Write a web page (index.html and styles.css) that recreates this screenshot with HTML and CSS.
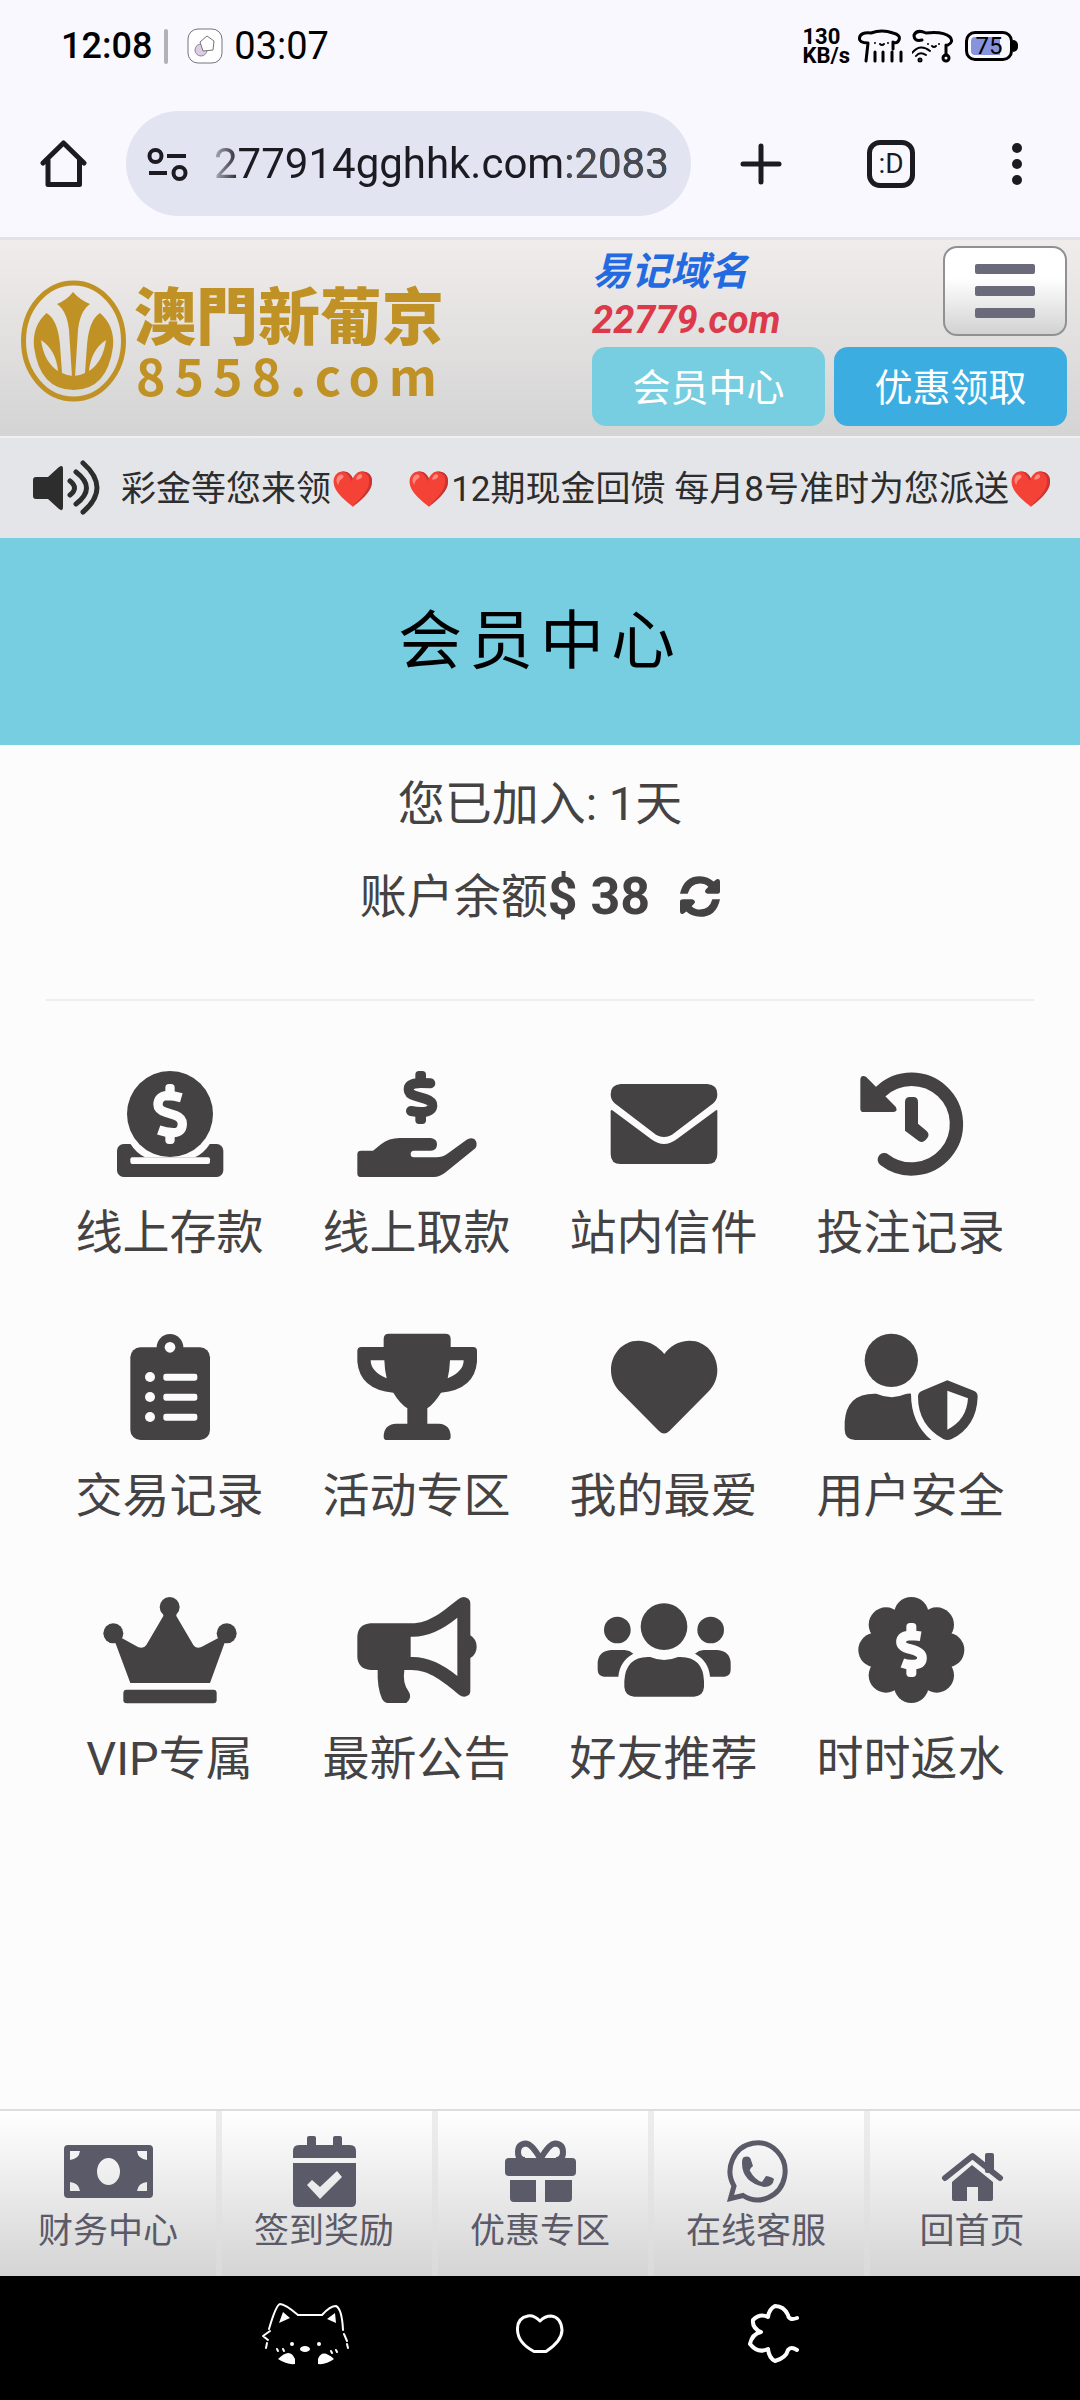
FILE: index.html
```html
<!DOCTYPE html>
<html lang="zh-CN">
<head>
<meta charset="utf-8">
<meta name="viewport" content="width=device-width, initial-scale=1">
<title>会员中心</title>
<link rel="stylesheet" href="styles.css">
</head>
<body>
<div class="status">
  <span class="clock">12:08</span>
  <span class="sep"></span>
  <svg class="app" viewBox="0 0 36 36"><rect x="1" y="1" width="34" height="34" rx="10" fill="#fff" stroke="#77727c" stroke-width="1"/><circle cx="14" cy="22" r="6" fill="#dccde3" stroke="#8d8494" stroke-width="1"/><path d="M20 8l7 5-1 9-10 1-3-9z" fill="#fff" stroke="#77727c" stroke-width="1" stroke-linejoin="round"/></svg>
  <span class="timer">03:07</span>
  <div class="signals">
    <span class="speed"><span>130</span><span>KB/s</span></span>
    <svg width="46" height="34" viewBox="858 29 46 34" fill="none" stroke="#000" stroke-width="3" stroke-linecap="round"><path d="M868 43Q859 43 859.500 38Q860 32 871 33Q882 29 893 33Q901 35 899 40Q897 44 893 42M868 43L866 61M893 43V49M875 52V61M883 52V61M892 52V61M901 52V61"/><path d="M875 43h0M888 43h0M880 44q2 2 4 0" stroke-width="2"/></svg>
    <svg width="42" height="34" viewBox="914 29 42 34" fill="none" stroke="#000" stroke-width="3" stroke-linecap="round"><path d="M924 40Q916 42 916 35Q919 29 928 33Q945 31 952 37Q956 42 950 45M948 45L948 55"/><circle cx="948" cy="58" r="3"/><path d="M914 53Q922 43 932 51M918 56Q922 51 928 55" stroke-width="2"/><circle cx="922" cy="60" r="1"/><path d="M930 44h0M941 44h0M934 46q2 2 4 0" stroke-width="2"/></svg>
    <span class="battery">75</span>
  </div>
</div>
<header class="browser">
  <button class="tool" aria-label="主页"><svg width="48" height="49" viewBox="40 139 48 49" fill="none" stroke="#1b1b21" stroke-width="5" stroke-linecap="round" stroke-linejoin="round"><path d="M43 163L63.500 143L84 163M48 160V184.500H79.500V160"/></svg></button>
  <div class="address">
    <svg width="42" height="34" viewBox="147 146 42 34" fill="none" stroke="#1b1b21" stroke-width="4"><circle cx="155.500" cy="155" r="6"/><circle cx="179.500" cy="172" r="6"/><path d="M167 155H186M149 172H167"/></svg>
    <span class="url">277914gghhk.com<span class="port">:2083</span></span>
  </div>
  <div class="tools">
    <button class="tool" aria-label="新标签页"><svg width="42" height="42" viewBox="0 0 42 42" stroke="#1b1b21" stroke-width="5" stroke-linecap="round"><path d="M21 3V39M3 21H39"/></svg></button>
    <button class="tool tabs" aria-label="标签页">:D</button>
    <button class="tool more" aria-label="更多"><svg width="12" height="42" viewBox="0 0 12 42" fill="#1b1b21"><circle cx="6" cy="5" r="5"/><circle cx="6" cy="21" r="5"/><circle cx="6" cy="37" r="5"/></svg></button>
  </div>
</header>

<header class="site">
  <a class="logo" href="#">
    <svg width="106" height="122" viewBox="21 280 106 122" fill="#c09225"><ellipse cx="73.500" cy="341" rx="50" ry="58" fill="none" stroke="#c09225" stroke-width="5"/><path d="M46.500 313Q32 326 34 347Q40 390 73.500 390Q107 390 113 347Q115 326 100 313Q89 320 87 345L85 373Q73.500 379 62 373L60 345Q58 320 46.500 313Z"/><path d="M73 292Q80 300 90 304Q80 311 78 330L75 377H72L69 330Q67 311 57 304Q67 300 73 292Z"/><path fill="#e0dfde" d="M41 340Q56 350 58 371Q44 362 41 340ZM106 340Q91 350 89 371Q103 362 106 340Z"/></svg>
    <span class="brand"><strong>澳門新葡京</strong><span>8558.com</span></span>
  </a>
  <div class="account">
    <a class="domain" href="#"><span>易记域名</span><em>22779.com</em></a>
    <button class="menu" aria-label="菜单"><i></i><i></i><i></i></button>
    <button class="pill">会员中心</button>
    <button class="pill promo">优惠领取</button>
  </div>
</header>

<section class="notice">
  <svg width="67" height="56" viewBox="33 459 67 56" fill="#2d2d2d"><path d="M36 476H48L59 466Q63 463 63 468V506Q63 511 59 508L48 498H36Q33 498 33 495V479Q33 476 36 476Z"/><path d="M70 480Q79 487 70 494M76 471Q97 487 76 503M83 462Q111 487 83 511" fill="none" stroke="#2d2d2d" stroke-width="5" stroke-linecap="round"/></svg>
  <p>彩金等您来领<span class="emoji">❤️</span><span class="next"><span class="emoji">❤️</span>12期现金回馈 每月8号准时为您派送<span class="emoji">❤️</span></span></p>
</section>

<h1>会员中心</h1>

<main>
  <section class="summary">
    <p>您已加入: 1天</p>
    <p>账户余额<b>$ 38</b><button class="refresh" aria-label="刷新余额"><svg width="40" height="41" viewBox="1137 954 120 122" fill="#444243"><path id="half" d="M1137 1007Q1148 954 1197 954Q1222 955 1238 970L1247 963Q1257 960 1257 972V1000Q1257 1007 1247 1007H1220Q1207 1002 1215 993L1222 986Q1212 976 1197 976Q1168 977 1160 1007Z"/><use href="#half" transform="rotate(180 1197 1015)"/></svg></button></p>
  </section>
  <nav class="grid" aria-label="会员功能">
    <a href="#"><svg viewBox="191 93 402 318"><rect x="233" y="312" width="319" height="99" rx="20"/><path class="cut" d="M273 311Q290 338 317 352H467Q495 338 512 311Z"/><rect class="cut" x="273" y="352" width="239" height="20" rx="6"/><circle cx="392" cy="222" r="129"/><rect class="cut" x="378" y="132" width="28" height="42" rx="11"/><rect class="cut" x="378" y="270" width="28" height="42" rx="11"/><path class="cutline" stroke-width="28" d="M426 173Q405 167 384 167Q356 168 356 194Q356 209 380 217L408 226Q429 234 429 252Q428 278 402 278Q380 278 358 270"/></svg>线上存款</a>
    <a href="#"><svg viewBox="931 93 402 318"><rect x="1127" y="93" width="32" height="42" rx="11"/><rect x="1127" y="210" width="32" height="42" rx="11"/><path class="line" stroke-width="30" d="M1172 130Q1158 129 1143 129Q1107 129 1107 149Q1107 162 1128 168L1158 177Q1179 184 1178 197Q1176 216 1143 216Q1130 216 1114 213"/><path d="M965 332H1000L1024 313Q1048 294 1080 294H1173Q1192 296 1192 313Q1192 332 1173 332H1122Q1113 333 1113 342Q1113 352 1122 352H1190Q1208 352 1222 342L1281 299Q1292 291 1304 297Q1317 310 1307 325L1218 397Q1201 411 1182 411H965Q953 411 953 401V342Q953 332 965 332Z"/></svg>线上取款</a>
    <a href="#"><svg viewBox="172 93 402 318"><path d="M243 132H503Q533 134 533 163Q533 180 521 190L405 278Q373 304 341 278L225 190Q213 180 213 163Q213 134 243 132Z"/><path d="M213 213Q214 208 220 212L335 298Q373 326 411 298L527 212Q533 208 533 213V342Q533 372 503 372H243Q213 372 213 342Z"/></svg>站内信件</a>
    <a href="#"><svg viewBox="912 93 402 318"><path class="line" stroke-width="40" d="M1022 155A134.500 134.500 0 1 1 1033 359"/><path d="M961 120Q961 103 978 110L1067 200Q1075 214 1060 216H971Q961 216 961 206ZM1095 186Q1095 171 1110 171H1120Q1134 171 1134 186V251L1160 273Q1170 283 1162 294L1156 301Q1147 310 1136 303L1095 272Z"/></svg>投注记录</a>
    <a href="#"><svg viewBox="191 882 402 318"><rect x="273" y="922" width="239" height="278" rx="30"/><circle cx="392" cy="922" r="40"/><g class="cut"><circle cx="392" cy="922" r="16"/><circle cx="332" cy="1011" r="15"/><circle cx="332" cy="1071" r="15"/><circle cx="332" cy="1131" r="15"/><rect x="372" y="1001" width="102" height="21" rx="7"/><rect x="372" y="1061" width="102" height="21" rx="7"/><rect x="372" y="1121" width="102" height="21" rx="7"/></g></svg>交易记录</a>
    <a href="#"><svg viewBox="931 882 402 318"><path fill-rule="evenodd" d="M1048 881H1217Q1233 881 1233 897V921H1300Q1312 921 1312 933V965Q1305 1048 1204 1058Q1184 1090 1163 1105V1151H1197Q1233 1153 1233 1190Q1233 1200 1223 1200H1042Q1032 1200 1032 1190Q1032 1153 1070 1151H1103V1105Q1080 1090 1061 1058Q960 1048 953 965V933Q953 921 965 921H1032V897Q1032 881 1048 881ZM993 961H1034Q1035 990 1041 1015Q993 995 993 961ZM1272 961H1231Q1230 990 1224 1015Q1272 995 1272 961Z"/></svg>活动专区</a>
    <a href="#"><svg viewBox="172 882 402 318"><path d="M374 942L366 933C345 912 322 902 296 902C248 902 214 943 214 990C214 1016 224 1038 242 1056L357 1172Q373 1189 390 1172L505 1056C523 1038 533 1016 533 990C533 943 498 902 450 902C425 902 400 912 381 933Z"/></svg>我的最爱</a>
    <a href="#"><svg viewBox="912 882 402 318"><circle cx="1054" cy="961" r="80"/><path d="M1009 1061Q1054 1081 1095 1063Q1104 1060 1113 1061Q1113 1150 1174 1200H945Q914 1198 914 1169V1145Q920 1058 1009 1061Z"/><path fill-rule="evenodd" d="M1222 1021L1303 1053Q1313 1058 1313 1070Q1310 1160 1235 1197Q1222 1203 1210 1197Q1134 1155 1134 1070Q1134 1058 1145 1053ZM1222 1052V1169Q1280 1140 1284 1075Z"/></svg>用户安全</a>
    <a href="#"><svg viewBox="191 108 402 318"><circle cx="391" cy="138" r="30"/><circle cx="222" cy="217" r="30"/><circle cx="562" cy="217" r="30"/><path d="M273 366L228 245L247 231L296 258Q312 265 321 252L372 165V150H411V165L462 252Q470 265 486 258L537 231L556 245L512 366Z"/><rect x="252" y="386" width="280" height="41" rx="10"/></svg>VIP专属</a>
    <a href="#"><svg viewBox="931 108 402 318"><path fill-rule="evenodd" d="M993 187H1115C1170 187 1210 150 1258 113Q1272 103 1286 113Q1292 118 1292 128V223Q1311 235 1311 257Q1311 280 1292 291V388Q1292 400 1286 403Q1272 412 1258 401C1210 362 1170 327 1115 327H1094Q1088 365 1106 390Q1120 410 1100 426H1045Q1033 425 1027 413Q1012 380 1014 327H993Q955 324 953 288V226Q955 190 993 187ZM1113 227V288Q1180 285 1253 345V170Q1180 230 1113 227Z"/></svg>最新公告</a>
    <a href="#"><svg viewBox="172 108 402 318"><circle cx="373" cy="197" r="70"/><circle cx="233" cy="207" r="40"/><circle cx="513" cy="207" r="40"/><path id="side" d="M214 267H255Q270 268 281 278Q240 300 236 347H193Q175 345 174 328V305Q176 270 214 267Z"/><use href="#side" transform="translate(747 0) scale(-1 1)"/><path d="M332 288Q373 306 415 288Q490 284 493 360V378Q491 405 463 407H284Q256 405 254 378V360Q258 284 332 288Z"/></svg>好友推荐</a>
    <a href="#"><svg viewBox="912 108 402 318"><circle cx="1114" cy="267" r="112"/><circle cx="1114" cy="160" r="52"/><circle cx="1114" cy="374" r="52"/><circle cx="1007" cy="267" r="52"/><circle cx="1221" cy="267" r="52"/><circle cx="1038" cy="191" r="52"/><circle cx="1190" cy="191" r="52"/><circle cx="1038" cy="343" r="52"/><circle cx="1190" cy="343" r="52"/><rect class="cut" x="1099" y="186" width="30" height="42" rx="11"/><rect class="cut" x="1099" y="306" width="30" height="42" rx="11"/><path class="cutline" stroke-width="29" d="M1142 226Q1124 223 1112 223Q1083 225 1083 243Q1083 258 1110 264Q1146 273 1146 290Q1146 311 1114 311Q1100 311 1087 306"/></svg>时时返水</a>
  </nav>
</main>

<nav class="bottom" aria-label="底部导航">
  <a href="#"><svg viewBox="63 2136 90 72"><path fill-rule="evenodd" d="M68 2145H149Q153 2145 153 2149V2194Q153 2198 149 2198H68Q64 2198 64 2194V2149Q64 2145 68 2145ZM97 2171.500A11.500 13.500 0 0 0 120 2171.500A11.500 13.500 0 0 0 97 2171.500ZM70 2151V2160Q79 2159 80 2151ZM147 2151V2160Q138 2159 137 2151ZM70 2191V2182Q79 2183 80 2191ZM147 2191V2182Q138 2183 137 2191Z"/></svg>财务中心</a>
  <a href="#"><svg viewBox="279 2136 90 72"><rect x="307" y="2136" width="9" height="13" rx="2"/><rect x="333" y="2136" width="9" height="13" rx="2"/><path d="M299 2145H350Q356 2145 356 2151V2158H293V2151Q293 2145 299 2145Z"/><path fill-rule="evenodd" d="M293 2163H356V2202Q356 2207 351 2207H298Q293 2207 293 2202ZM307 2185L312 2180L320 2187L337 2171L342 2177L320 2199Z"/></svg>签到奖励</a>
  <a href="#"><svg viewBox="495 2136 90 72"><rect x="505" y="2158" width="71" height="18" rx="4"/><path d="M510 2180H536V2202H514Q510 2202 510 2198ZM545 2180H572V2198Q572 2202 568 2202H545Z"/><path fill="none" stroke="#5a5a68" stroke-width="6" d="M540.500 2159Q532 2144 526 2143.500Q518 2144 518 2152Q518 2160 525 2160M540.500 2159Q549 2144 555 2143.500Q563 2144 563 2152Q563 2160 556 2160"/></svg>优惠专区</a>
  <a href="#"><svg viewBox="711 2136 90 72"><path fill="none" stroke="#5a5a68" stroke-width="5" d="M730.500 2198.500L734 2186A27.500 28.500 0 1 1 743 2195.500Z"/><path d="M744 2157Q750 2155 751 2160L753 2166Q749 2169 750 2171Q755 2180 762 2182L766 2176Q772 2177 774 2179Q773 2187 764 2187Q742 2182 742 2163Q742 2158 744 2157Z"/></svg>在线客服</a>
  <a href="#"><svg viewBox="928 2136 90 72"><path fill="none" stroke="#5a5a68" stroke-width="6" stroke-linecap="round" stroke-linejoin="round" d="M946 2178L973.500 2156L1001 2178"/><rect x="986" y="2153" width="9" height="20" rx="2"/><path d="M953 2182L973 2165L994 2182V2199Q994 2201 992 2201H979V2187H968V2201H955Q953 2201 953 2199Z"/></svg>回首页</a>
</nav>

<footer class="system">
  <button aria-label="最近任务"><svg width="90" height="64" viewBox="261 2302 90 64" fill="#fff"><path fill="none" stroke="#fff" stroke-width="2" stroke-linecap="round" stroke-linejoin="round" d="M269 2329Q276 2305 280 2304Q285 2304 298 2315H322Q330 2306 336 2306Q342 2309 343 2330M270 2331L263 2336L268 2340M267 2343L266 2348M344 2334L347 2341M347 2344L348 2348M277 2349L278 2351M283 2349L284 2351M331 2351L332 2353M336 2350L337 2352"/><path d="M283 2312L290 2318L279 2323ZM335 2313L336 2323L327 2319ZM278 2359Q290 2347 295 2359V2364Q287 2365 278 2359ZM334 2359Q322 2348 318 2359V2364Q326 2365 334 2359Z"/><circle cx="292" cy="2344" r="2"/><circle cx="319" cy="2344" r="2"/><ellipse cx="305" cy="2349" rx="5" ry="3"/></svg></button>
  <button aria-label="主屏幕"><svg width="48" height="40" viewBox="516 2314 48 40" fill="none" stroke="#fff" stroke-width="3" stroke-linejoin="round"><path d="M540 2321Q534 2315 528 2316Q517 2318 517.500 2330Q518 2343 534 2351.500H546Q562 2341 562 2330Q561 2317 551 2316Q545 2316 540 2321Z"/></svg></button>
  <button aria-label="返回"><svg width="52" height="62" viewBox="747 2303 52 62" fill="none" stroke="#fff" stroke-width="4" stroke-linecap="round" stroke-linejoin="round"><path d="M796 2318Q788 2321 787 2315Q783 2306 774 2306Q768 2309 767 2317Q759 2313 752 2320Q751 2328 760 2332Q751 2334 749 2344Q757 2354 767 2349Q768 2358 774 2361Q785 2358 787 2350Q790 2346 796 2350"/></svg></button>
</footer>
</body>
</html>
```
FILE: styles.css
```css
* { box-sizing: border-box; }

body {
  margin: 0;
  min-height: 100vh;
  display: flex;
  flex-direction: column;
  background: #fcfcfc;
  color: #444243;
  font-family: Roboto, "Noto Sans CJK SC", sans-serif;
  font-size: 47px;
  line-height: 1;
}

svg { display: block; flex: none; }
a { color: inherit; text-decoration: none; }
button { border: 0; padding: 0; background: none; color: inherit; font: inherit; }
p { margin: 0; }

/* Phone status bar */
.status {
  height: 92px;
  padding: 0 62px 0 61px;
  display: flex;
  align-items: center;
  background: #faf8ff;
  color: #000;
}
.clock { font-size: 36px; font-weight: 500; }
.sep { width: 4px; height: 35px; margin: 0 19px 0 12px; border-radius: 2px; background: #b3b0b8; }
.app { width: 36px; height: 36px; margin-right: 11px; }
.timer { font-size: 38px; }
.signals { margin-left: auto; display: flex; align-items: center; gap: 8px; }
.speed { display: flex; flex-direction: column; font-size: 22px; line-height: 19px; font-weight: 700; }
.battery {
  position: relative;
  width: 48px;
  height: 30px;
  margin: 0 5px 0 3px;
  border: 3px solid #000;
  border-radius: 10px;
  background: linear-gradient(90deg, #8793dc 80%, transparent 80%) content-box;
  padding: 3px;
  font-size: 24px;
  line-height: 18px;
  text-align: center;
}
.battery::after {
  content: "";
  position: absolute;
  right: -8px;
  top: 6px;
  width: 5px;
  height: 12px;
  border-radius: 0 5px 5px 0;
  background: #000;
}

/* Browser toolbar */
.browser {
  display: flex;
  align-items: center;
  padding: 19px 43px 21px 40px;
  border-bottom: 3px solid #e2e2ea;
  background: #faf8ff;
  color: #1b1b21;
}
.tool { width: 48px; height: 48px; display: flex; align-items: center; justify-content: center; }
.address {
  flex: 1;
  min-width: 0;
  height: 105px;
  margin: 0 46px 0 38px;
  padding: 0 22px 0 21px;
  display: flex;
  align-items: center;
  gap: 25px;
  border-radius: 53px;
  background: #e2e4f2;
}
.url {
  font-size: 42px;
  line-height: 56px;
  white-space: nowrap;
  background: linear-gradient(90deg, #aeafbb, #1b1b21 26px);
  background-clip: text;
  color: transparent;
}
.port { color: #484952; }
.tools { display: flex; gap: 82px; }
.tabs { border: 5px solid #1b1b21; border-radius: 13px; font-size: 28px; }
.more { width: 40px; }

/* Site header */
.site {
  display: flex;
  justify-content: space-between;
  padding: 6px 13px 10px 21px;
  border-bottom: 2px solid #f0f0f0;
  background: linear-gradient(#f0eceb, #d4d4d4);
}
.logo { display: flex; align-items: center; gap: 7px; padding-top: 10px; color: #c09225; }
.brand { display: flex; flex-direction: column; font-family: "Noto Sans CJK TC", sans-serif; }
.brand strong { font-size: 62px; line-height: 66px; font-weight: 900; }
.brand span { padding-left: 2px; font-size: 50px; line-height: 56px; font-weight: 700; letter-spacing: 9px; }
.account {
  display: grid;
  grid-template-columns: 233px 233px;
  gap: 5px 9px;
}
.domain { height: 96px; padding-top: 2px; display: flex; flex-direction: column; font-size: 39px; line-height: 48px; font-weight: 700; font-style: italic; color: #236ae0; }
.domain em { font-size: 38px; color: #dc3a4a; }
.menu {
  justify-self: end;
  width: 124px;
  height: 90px;
  display: flex;
  flex-direction: column;
  align-items: center;
  justify-content: center;
  gap: 12px;
  border: 2px solid #8f9194;
  border-radius: 14px;
  background: linear-gradient(#fff 35%, #d2d2d2);
}
.menu i { width: 60px; height: 10px; border-radius: 2px; background: #6a6a7a; }
.pill { height: 79px; padding-top: 2px; border-radius: 14px; background: #77cee0; color: #fff; font-size: 38px; }
.promo { background: #3cade0; }

/* Scrolling notice */
.notice {
  height: 100px;
  display: flex;
  align-items: center;
  gap: 21px;
  padding: 0 27px 0 33px;
  background: #e4e5e9;
  color: #2d2d2d;
}
.notice p { flex: 1; min-width: 0; overflow: hidden; padding-top: 3px; white-space: nowrap; font-size: 35px; line-height: 56px; }
.next { margin-left: 33px; }
.emoji { font-family: "Noto Color Emoji", sans-serif; color: #f44336; }

h1 {
  margin: 0;
  padding: 64px 0;
  background: #77cee0;
  color: #000;
  font-size: 64px;
  line-height: 79px;
  font-weight: 400;
  letter-spacing: 7px;
  text-align: center;
}

main { flex: 1; padding: 12px 46px; }
.summary { padding-bottom: 56px; border-bottom: 2px solid #eee; }
.summary p { display: flex; align-items: center; justify-content: center; line-height: 93px; }
.summary b { font-size: 52px; white-space: pre; }
.refresh { margin-left: 30px; }

.grid {
  display: grid;
  grid-template-columns: repeat(4, 1fr);
  row-gap: 49px;
  padding-top: 70px;
}
.grid a { display: flex; flex-direction: column; align-items: center; gap: 22px; line-height: 68px; height: 214px; }
.grid svg { width: 134px; height: 106px; overflow: visible; fill: #444243; }
.grid .cut { fill: #fcfcfc; }
.grid .cutline { fill: none; stroke: #fcfcfc; stroke-linejoin: round; }
.grid .line { fill: none; stroke: #444243; stroke-linecap: round; }

/* Bottom tabs */
.bottom {
  display: grid;
  grid-template-columns: repeat(5, 1fr);
  border-top: 2px solid #dcdedd;
  color: #5a5a68;
  font-size: 35px;
}
.bottom a {
  height: 165px;
  padding-top: 25px;
  display: flex;
  flex-direction: column;
  align-items: center;
  line-height: 48px;
  background: linear-gradient(#fff, #d4d4d4);
}
.bottom a + a { background: linear-gradient(#ededed, #dadada) left / 6px 100% no-repeat, linear-gradient(#fff, #d4d4d4); }
.bottom svg { width: 90px; height: 72px; fill: #5a5a68; }

/* Phone navigation bar */
.system {
  height: 124px;
  display: flex;
  align-items: center;
  justify-content: center;
  gap: 144px;
  padding: 0 0 8px;
  background: #000;
}
.system button { width: 90px; display: flex; justify-content: center; }
```
